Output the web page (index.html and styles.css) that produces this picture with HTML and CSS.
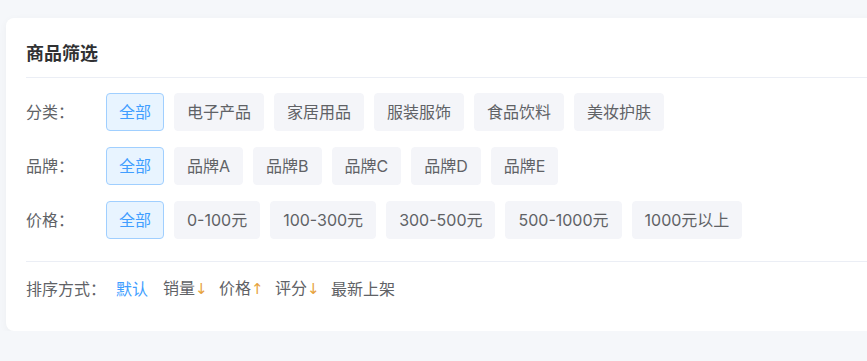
FILE: index.html
```html
<!DOCTYPE html>
<html lang="zh-CN">
<head>
    <meta charset="UTF-8">
    <meta name="viewport" content="width=device-width, initial-scale=1.0">
    <title>商品筛选</title>
    <link rel="stylesheet" href="styles.css">
</head>
<body>

    <div class="filter-card">
        <h2 class="filter-title">商品筛选</h2>

        <div class="filter-row">
            <span class="filter-label">分类：</span>
            <div class="tag-list">
                <span class="tag active">全部</span>
                <span class="tag">电子产品</span>
                <span class="tag">家居用品</span>
                <span class="tag">服装服饰</span>
                <span class="tag">食品饮料</span>
                <span class="tag">美妆护肤</span>
            </div>
        </div>

        <div class="filter-row">
            <span class="filter-label">品牌：</span>
            <div class="tag-list">
                <span class="tag active">全部</span>
                <span class="tag">品牌A</span>
                <span class="tag">品牌B</span>
                <span class="tag">品牌C</span>
                <span class="tag">品牌D</span>
                <span class="tag">品牌E</span>
            </div>
        </div>

        <div class="filter-row">
            <span class="filter-label">价格：</span>
            <div class="tag-list">
                <span class="tag active">全部</span>
                <span class="tag">0-100元</span>
                <span class="tag">100-300元</span>
                <span class="tag">300-500元</span>
                <span class="tag">500-1000元</span>
                <span class="tag">1000元以上</span>
            </div>
        </div>

        <div class="sort-bar">
            <span class="filter-label">排序方式：</span>
            <span class="sort-item active">默认</span>
            <span class="sort-item">销量<span class="arrow">↓</span></span>
            <span class="sort-item">价格<span class="arrow">↑</span></span>
            <span class="sort-item">评分<span class="arrow">↓</span></span>
            <span class="sort-item">最新上架</span>
        </div>
    </div>

</body>
</html>
```

FILE: styles.css
```css
html, body {
    overflow: hidden;
}
body {
    font-family: "Inter", "Noto Sans CJK SC", sans-serif;
    background-color: #f5f7fa;
    color: #606266;
    margin: 0;
    padding: 18px 0 0 6px;
}
.filter-card {
    width: 1000px;
    background-color: #fff;
    border-radius: 8px;
    box-shadow: 0 2px 8px rgba(0, 0, 0, 0.04);
    padding: 20px;
}
.filter-title {
    margin: 0 0 15px;
    font-size: 18px;
    font-weight: bold;
    color: #303133;
    line-height: 32px;
    padding-bottom: 7px;
    border-bottom: 1px solid #ebeef5;
}
.filter-row {
    display: flex;
    align-items: center;
    margin-bottom: 16px;
}
.filter-label {
    width: 80px;
    flex-shrink: 0;
    white-space: nowrap;
    font-size: 16px;
    line-height: 24px;
    color: #606266;
}
.tag-list {
    display: flex;
    gap: 10px;
}
.tag {
    font-size: 16px;
    line-height: 24px;
    padding: 6px 12px;
    border: 1px solid #f4f5f9;
    border-radius: 4px;
    background-color: #f4f5f9;
    color: #606266;
    white-space: nowrap;
    cursor: pointer;
}
.tag.active {
    background-color: #e8f4ff;
    border-color: #a0cfff;
    color: #409eff;
}
.sort-bar {
    display: flex;
    align-items: center;
    gap: 5px;
    margin-top: 22px;
    padding: 14px 0 10px;
    border-top: 1px solid #ebeef5;
}
.sort-item {
    font-size: 16px;
    line-height: 24px;
    padding: 0 5px;
    color: #606266;
    white-space: nowrap;
    cursor: pointer;
}
.sort-item.active {
    color: #409eff;
}
.arrow {
    display: inline-block;
    width: 9px;
    font-family: "DejaVu Sans", sans-serif;
    font-size: 15px;
    color: #e6a23c;
    text-align: center;
}
```
